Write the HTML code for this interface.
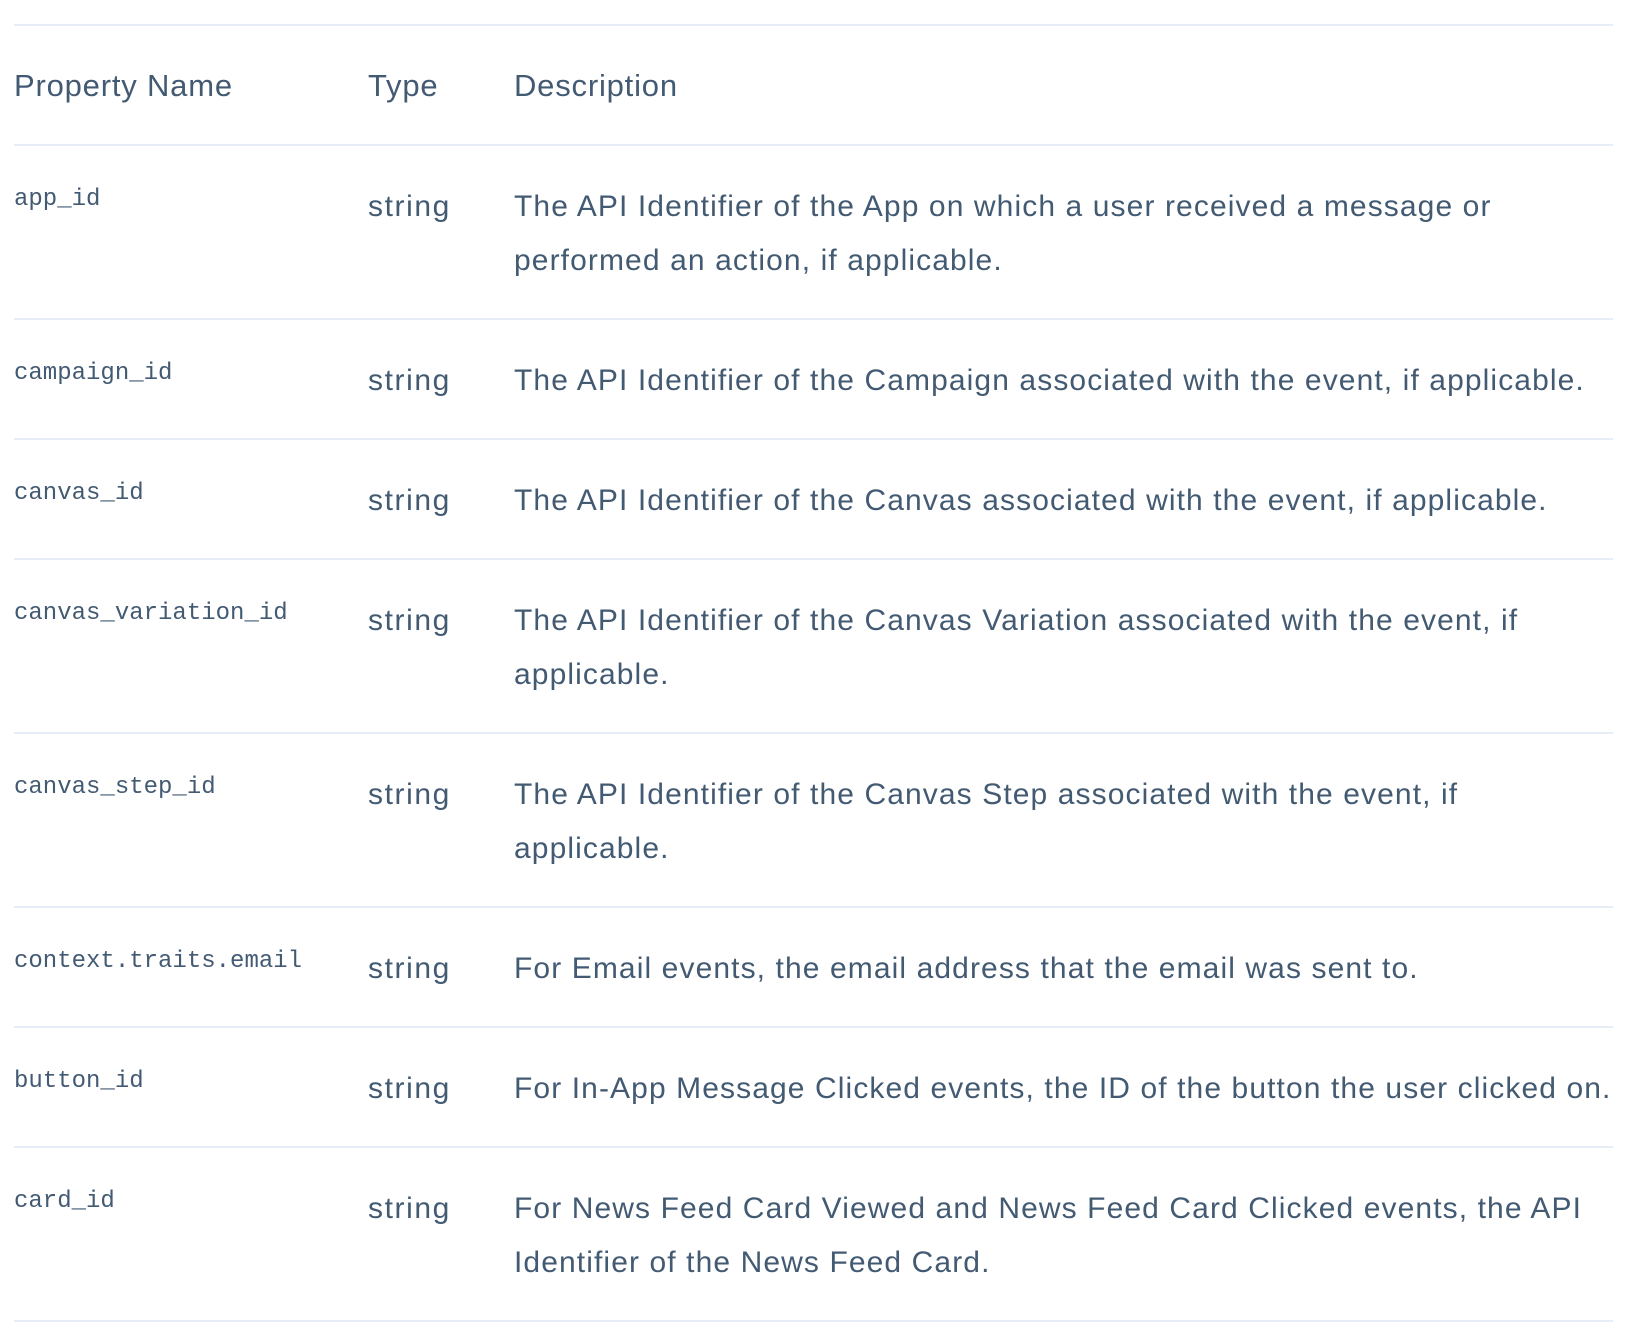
<!DOCTYPE html>
<html><head><meta charset="utf-8"><style>
html,body{margin:0;padding:0;background:#fff;width:1626px;height:1340px;overflow:hidden}
body{font-family:"Liberation Sans",sans-serif;color:#435a73}
table{position:absolute;left:14px;top:24px;width:1599px;border-collapse:collapse}
td,th{border-top:2px solid #e6edf6;border-bottom:2px solid #e6edf6;vertical-align:top;padding:34px 0 30px 0;text-align:left;font-weight:normal;white-space:nowrap}
th{font-size:31px;line-height:54px;letter-spacing:0.8px;padding:33px 0 31px 0}
td{font-size:30px;line-height:54px;letter-spacing:1.1px}
td.m{font-family:"Liberation Mono",monospace;font-size:24px;line-height:40px;width:354px;letter-spacing:0}
td.t{width:146px;letter-spacing:1.6px}
</style></head><body>
<table>
<tr><th>Property Name</th><th>Type</th><th>Description</th></tr>
<tr><td class="m">app_id</td><td class="t">string</td><td>The API Identifier of the App on which a user received a message or<br>performed an action, if applicable.</td></tr>
<tr><td class="m">campaign_id</td><td class="t">string</td><td>The API Identifier of the Campaign associated with the event, if applicable.</td></tr>
<tr><td class="m">canvas_id</td><td class="t">string</td><td>The API Identifier of the Canvas associated with the event, if applicable.</td></tr>
<tr><td class="m">canvas_variation_id</td><td class="t">string</td><td>The API Identifier of the Canvas Variation associated with the event, if<br>applicable.</td></tr>
<tr><td class="m">canvas_step_id</td><td class="t">string</td><td>The API Identifier of the Canvas Step associated with the event, if<br>applicable.</td></tr>
<tr><td class="m">context.traits.email</td><td class="t">string</td><td>For Email events, the email address that the email was sent to.</td></tr>
<tr><td class="m">button_id</td><td class="t">string</td><td>For In-App Message Clicked events, the ID of the button the user clicked on.</td></tr>
<tr><td class="m">card_id</td><td class="t">string</td><td>For News Feed Card Viewed and News Feed Card Clicked events, the API<br>Identifier of the News Feed Card.</td></tr>
</table>
</body></html>
